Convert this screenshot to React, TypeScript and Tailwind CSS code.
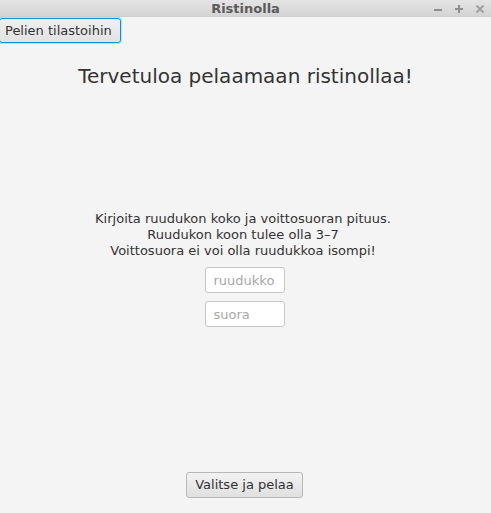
import React from "react";

export default function App() {
  return (
    <div className="w-[491px] h-[513px] flex flex-col bg-[#f4f4f4] overflow-hidden" style={{ fontFamily: '"DejaVu Sans", sans-serif' }}>
      <div className="h-[17px] flex items-center relative bg-gradient-to-b from-[#e4e4e4] to-[#d4d4d4] border-b border-[#cfcfcf]">
        <div className="flex-1 text-center text-[13px] leading-[17px] font-bold text-[#5b5b5b]">Ristinolla</div>
        <div className="absolute right-[6px] top-0 h-[17px] flex items-center gap-[11px] text-[#9a9a9a]">
          <svg width="10" height="10" viewBox="0 0 10 10"><rect x="1" y="5" width="8" height="2" fill="#8e8e8e" /></svg>
          <svg width="10" height="10" viewBox="0 0 10 10"><rect x="1" y="4" width="8" height="2" fill="#8e8e8e" /><rect x="4" y="1" width="2" height="8" fill="#8e8e8e" /></svg>
          <svg width="10" height="10" viewBox="0 0 10 10"><path d="M1.5 1.5 L8.5 8.5 M8.5 1.5 L1.5 8.5" stroke="#a0a0a0" strokeWidth="2" /></svg>
        </div>
      </div>
      <div className="flex">
        <button className="ml-[-1px] mt-[1px] h-[25px] w-[122px] pl-[5px] text-left rounded-[3px] border border-[#0798ce] bg-gradient-to-b from-[#f0f0f0] to-[#e2e2e2] text-[13px] text-[#333] shadow-[0_0_0_1px_rgba(3,158,211,0.25)]">Pelien tilastoihin</button>
      </div>
      <div className="mt-[21px] text-center text-[20px] leading-[24px] text-[#333]">Tervetuloa pelaamaan ristinollaa!</div>
      <div className="mt-[123px] pr-[5px] flex flex-col items-center text-[13px] leading-[16px] text-[#333] text-center">
        <div>Kirjoita ruudukon koko ja voittosuoran pituus.</div>
        <div>Ruudukon koon tulee olla 3–7</div>
        <div>Voittosuora ei voi olla ruudukkoa isompi!</div>
      </div>
      <div className="mt-[8px] flex flex-col items-center gap-[8px]">
        <input placeholder="ruudukko" className="ml-[-2px] w-[80px] h-[26px] rounded-[3px] border border-[#c8c8c8] bg-white px-[8px] text-[13px] text-[#333] placeholder:text-[#a8a8a8] outline-none" style={{ fontFamily: '"DejaVu Sans", sans-serif' }} />
        <input placeholder="suora" className="ml-[-2px] w-[80px] h-[26px] rounded-[3px] border border-[#c8c8c8] bg-white px-[8px] text-[13px] text-[#333] placeholder:text-[#a8a8a8] outline-none" style={{ fontFamily: '"DejaVu Sans", sans-serif' }} />
      </div>
      <div className="mt-auto mb-[15px] flex justify-center">
        <button className="ml-[-2px] h-[26px] w-[117px] rounded-[3px] border border-[#b8b8b8] bg-gradient-to-b from-[#f2f2f2] to-[#e0e0e0] text-[13px] text-[#333]">Valitse ja pelaa</button>
      </div>
    </div>
  );
}
